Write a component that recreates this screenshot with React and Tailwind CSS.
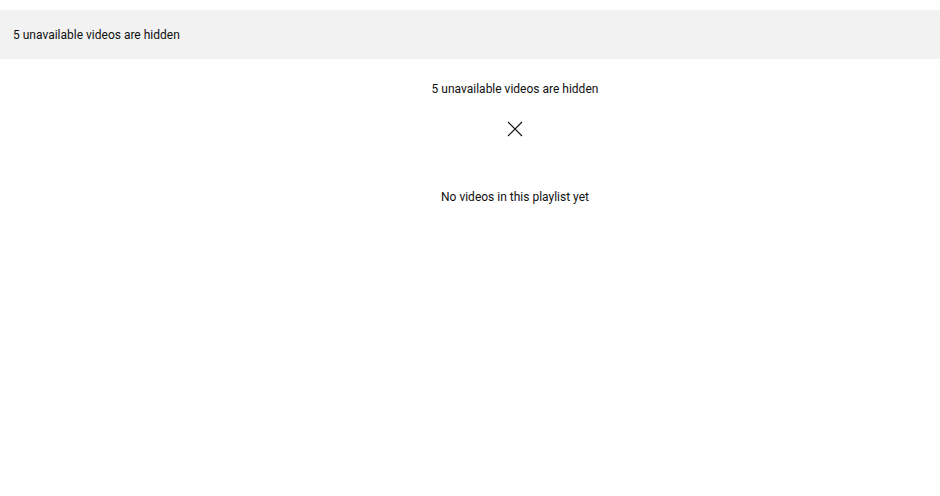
export default function App() {
  return (
    <div className="min-h-[496px] w-[940px] bg-white font-['Roboto',sans-serif] text-[#0f0f0f]">
      <div className="h-[10px]" />
      <div className="flex h-[49px] items-center bg-[#f2f2f2] px-[13px] text-[12px]">
        5 unavailable videos are hidden
      </div>
      <div className="flex flex-col items-center pl-[90px]">
        <div className="mt-[21px] flex h-[18px] items-center text-[12px]">
          5 unavailable videos are hidden
        </div>
        <svg className="mt-[23px]" width="16" height="16" viewBox="0 0 16 16" fill="none">
          <path d="M1 1L15 15M15 1L1 15" stroke="#0f0f0f" strokeWidth="1.1" />
        </svg>
        <div className="mt-[51px] flex h-[18px] items-center text-[12px]">
          No videos in this playlist yet
        </div>
      </div>
    </div>
  );
}
